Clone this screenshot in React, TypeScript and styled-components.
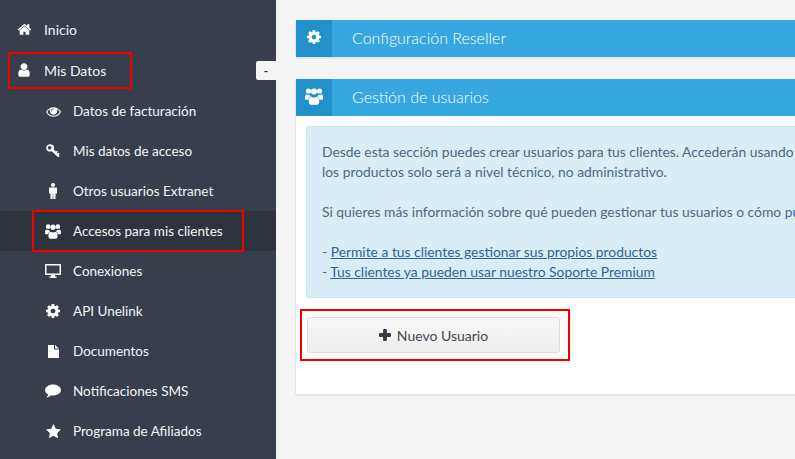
import React from "react";
import styled, { createGlobalStyle } from "styled-components";

const Global = createGlobalStyle`
  html, body { margin: 0; padding: 0; height: 100%; overflow: hidden; }
  body { font-family: Lato, "Liberation Sans", sans-serif; font-size: 14px; background: #f4f4f4; }
  #root { height: 100%; }
`;

const Page = styled.div`
  display: flex;
  width: 795px;
  height: 459px;
  overflow: hidden;
`;

const Sidebar = styled.nav`
  position: relative;
  flex: 0 0 276px;
  background: #383e4b;
  padding-top: 10px;
  box-sizing: border-box;
`;

const Row = styled.div<{ $sub?: boolean; $active?: boolean; $gap?: boolean }>`
  display: flex;
  align-items: center;
  height: 40px;
  box-sizing: border-box;
  padding-bottom: ${(p) => (p.$sub ? "0" : "2px")};
  color: #f4f6f8;
  font-size: ${(p) => (p.$sub ? "13.5px" : "14px")};
  background: ${(p) => (p.$active ? "#2f333e" : "transparent")};
  padding-left: ${(p) => (p.$sub ? "45px" : "16px")};
  margin-top: ${(p) => (p.$gap ? "1px" : "0")};
  position: relative;
`;

const IconCell = styled.span`
  flex: 0 0 16px;
  margin-right: 12px;
  display: flex;
  align-items: center;
  justify-content: center;
  color: #fff;
`;

const Svg = styled.svg`
  display: block;
  flex: none;
  fill: currentColor;
`;

const RedBox = styled.span<{ $left: number; $top: number; $width: number; $height: number }>`
  position: absolute;
  left: ${(p) => p.$left}px;
  top: ${(p) => p.$top}px;
  width: ${(p) => p.$width}px;
  height: ${(p) => p.$height}px;
  border: 2px solid #f00000;
  box-sizing: border-box;
  pointer-events: none;
`;

const CollapseTab = styled.button`
  position: absolute;
  right: 0;
  top: 61px;
  width: 20px;
  height: 19px;
  padding: 0;
  border: 0;
  border-radius: 2px 0 0 2px;
  background: #f4f4f4;
  color: #333;
  font: 700 12px Lato, sans-serif;
`;

const Main = styled.main`
  flex: 0 0 600px;
  padding: 20px 0 0 20px;
  box-sizing: border-box;
`;

const Panel = styled.section`
  margin-bottom: 22px;
  background: #fff;
  border-radius: 2px 0 0 2px;
  box-shadow: 0 1px 1px 1px #e4e6e8;
`;

const PanelHead = styled.header`
  display: flex;
  align-items: center;
  height: 37px;
  background: #36a7e0;
  color: #fff;
  border-radius: 2px 0 0 0;
`;

const HeadIcon = styled.span`
  flex: 0 0 36px;
  align-self: stretch;
  display: flex;
  align-items: center;
  justify-content: center;
  padding-bottom: 3px;
  box-sizing: border-box;
  background: #2191c9;
`;

const HeadTitle = styled.h2`
  margin: 0 0 2px 20px;
  font-size: 16px;
  font-weight: 300;
  line-height: 35px;
`;

const PanelBody = styled.div`
  padding: 10px 0 40px 10px;
  height: 278px;
  box-sizing: border-box;
`;

const Alert = styled.div`
  height: 172px;
  padding: 15px 0 0 15px;
  box-sizing: border-box;
  background: #d9edf7;
  border: 1px solid #bce8f1;
  border-right: 0;
  border-radius: 4px 0 0 4px;
  color: #4b6a80;
  font-size: 13.85px;
  line-height: 20px;
  white-space: nowrap;
`;

const Line = styled.p<{ $spaced?: boolean }>`
  margin: ${(p) => (p.$spaced ? "20px" : "0")} 0 0;
`;

const AlertLink = styled.a`
  color: #2f6396;
  text-decoration: underline;
`;

const ButtonArea = styled.div`
  position: relative;
  margin-top: 19px;
  margin-left: 1px;
`;

const NewButton = styled.button`
  display: flex;
  align-items: center;
  justify-content: center;
  gap: 6px;
  width: 253px;
  height: 36px;
  padding: 0;
  border: 1px solid #dcdcdc;
  border-radius: 3px;
  background: linear-gradient(#f7f7f7, #eeeeee);
  color: #414a55;
  font: 400 14px Lato, sans-serif;
`;

const PlusMark = styled.span`
  display: flex;
  color: #333d48;
`;

type IconProps = { w: number; h: number };

const HomeIcon = () => (
  <Svg width={15} height={15} viewBox="0 0 1792 1792">
    <path d="M1472 992v480q0 26-19 45t-45 19h-384v-384h-256v384h-384q-26 0-45-19t-19-45v-480q0-1 .5-3t.5-3l575-474 575 474q1 2 1 6zm223-69l-62 74q-8 9-21 11h-3q-13 0-21-7l-692-577-692 577q-12 8-24 7-13-2-21-11l-62-74q-8-10-7-23.5t11-21.5l719-599q32-26 76-26t76 26l244 204v-195q0-14 9-23t23-9h192q14 0 23 9t9 23v408l219 182q10 8 11 21.5t-7 23.5z" />
  </Svg>
);
const UserIcon = () => (
  <Svg width={16} height={16} viewBox="0 0 1792 1792">
    <path d="M1536 1399q0 109-62.5 187t-150.5 78h-854q-88 0-150.5-78t-62.5-187q0-85 8.5-160.5t31.5-152 58.5-131 94-89 134.5-34.5q131 128 313 128t313-128q76 0 134.5 34.5t94 89 58.5 131 31.5 152 8.5 160.5zm-256-887q0 159-112.5 271.5t-271.5 112.5-271.5-112.5-112.5-271.5 112.5-271.5 271.5-112.5 271.5 112.5 112.5 271.5z" />
  </Svg>
);
const EyeIcon = () => (
  <Svg width={15} height={15} viewBox="0 0 1792 1792">
    <path d="M1664 960q-152-236-381-353 61 104 61 225 0 185-131.5 316.5t-316.5 131.5-316.5-131.5-131.5-316.5q0-121 61-225-229 117-381 353 133 205 333.5 326.5t434.5 121.5 434.5-121.5 333.5-326.5zm-720-384q0-20-14-34t-34-14q-125 0-214.5 89.5t-89.5 214.5q0 20 14 34t34 14 34-14 14-34q0-86 61-147t147-61q20 0 34-14t14-34zm848 384q0 34-20 69-140 230-376.5 368.5t-499.5 138.5-499.5-139-376.5-368q-20-35-20-69t20-69q140-229 376.5-368t499.5-139 499.5 139 376.5 368q20 35 20 69z" />
  </Svg>
);
const KeyIcon = () => (
  <Svg width={14} height={14} viewBox="0 0 14 14">
    <path fillRule="evenodd" d="M4.2 0.2C6.500 0.200 8.200 1.800 8.200 3.800c0 .6-.1 1.100-.4 1.600l2.200 2.400 1-1 .9.9-1 1 .8.8 1-1 .9.9-1 1 .7.7c.3.4.3.9 0 1.200l-.5.5c-.3.3-.8.3-1.200 0L5.700 7.200c-.5.3-1 .4-1.500.4C2 7.600.2 6 .2 3.900.2 1.900 2 .2 4.200.2zM3.700 1.900c-1 0-1.800.8-1.800 1.800s.8 1.800 1.800 1.800 1.800-.8 1.800-1.800-.8-1.800-1.800-1.800z" />
  </Svg>
);
const MaleIcon = () => (
  <Svg width={8} height={16} viewBox="0 0 8 16">
    <circle cx="4" cy="2" r="2" />
    <path d="M1 4.500h6c.6 0 1 .4 1 1V10c0 .4-.3.6-.6.6H6.500V16H4.300v-5h-.6v5H1.500v-5.400H.6C.3 10.600 0 10.400 0 10V5.500c0-.6.4-1 1-1z" />
  </Svg>
);
const UsersIcon = ({ w, h }: IconProps) => (
  <Svg width={w} height={h} viewBox="0 0 18 17">
    <circle cx="3.500" cy="3" r="2.600" />
    <circle cx="14.500" cy="3" r="2.600" />
    <circle cx="9" cy="3.600" r="3" />
    <path d="M1.500 6.300c.7.4 1.300.6 2 .6.4 0 .7 0 1-.1.3.8.8 1.300 1.300 1.700-1.200.5-2 1.600-2.200 3.200H1.200C.4 11.700 0 11.200 0 10.400 0 8 .5 6.300 1.500 6.300z" />
    <path d="M16.500 6.300c-.7.4-1.300.6-2 .6-.4 0-.7 0-1-.1-.3.8-.8 1.300-1.300 1.700 1.200.5 2 1.600 2.200 3.200h2.400c.8 0 1.200-.5 1.200-1.300C18 8 17.500 6.300 16.500 6.300z" />
    <path d="M6.400 8.700c.8.6 1.700.9 2.600.9s1.800-.3 2.600-.9c1.800.2 2.600 2 2.600 5.300 0 1.700-.9 2.800-2.300 2.800H6.100c-1.400 0-2.300-1.100-2.300-2.800 0-3.300.8-5.100 2.600-5.300z" />
  </Svg>
);
const DesktopIcon = () => (
  <Svg width={16} height={14} viewBox="0 0 16 14">
    <path fillRule="evenodd" d="M1 0h14c.6 0 1 .4 1 1v9c0 .6-.4 1-1 1H10v1.500h1.500V14h-7v-1.500H6V11H1c-.6 0-1-.4-1-1V1c0-.6.4-1 1-1zm.5 1.500v8h13v-8z" />
  </Svg>
);
const CogIcon = ({ w, h }: IconProps) => (
  <Svg width={w} height={h} viewBox="0 128 1536 1536">
    <path d="M1024 896q0-106-75-181t-181-75-181 75-75 181 75 181 181 75 181-75 75-181zm512-109v222q0 12-8 23t-20 13l-185 28q-19 54-39 91 35 50 107 138 10 12 10 25t-9 23q-27 37-99 108t-94 71q-12 0-26-9l-138-108q-44 23-91 38-16 136-29 186-7 28-36 28h-222q-14 0-24.500-8.500t-11.500-21.500l-28-184q-49-16-90-37l-141 107q-10 9-25 9-14 0-25-11-126-114-165-168-7-10-7-23 0-12 8-23 15-21 51-66.500t54-70.500q-27-50-41-99l-183-27q-13-2-21-12.500t-8-23.500v-222q0-12 8-23t19-13l186-28q14-46 39-92-40-57-107-138-10-12-10-24 0-10 9-23 26-36 98.500-107.500t94.500-71.500q13 0 26 10l138 107q44-23 91-38 16-136 29-186 7-28 36-28h222q14 0 24.500 8.500t11.500 21.500l28 184q49 16 90 37l142-107q9-9 24-9 13 0 25 10 129 119 165 170 7 8 7 22 0 12-8 23-15 21-51 66.500t-54 70.500q26 50 41 98l183 28q13 2 21 12.500t8 23.500z" />
  </Svg>
);
const FileIcon = () => (
  <Svg width={11} height={13} viewBox="0 0 11 13">
    <path d="M0 0h6v4.500h5V13H0z" />
    <path d="M7 0l4 3.500H7z" />
  </Svg>
);
const CommentIcon = () => (
  <Svg width={16} height={14} viewBox="0 0 16 14">
    <path d="M8 .5c4.400 0 8 2.500 8 5.500s-3.600 5.500-8 5.500c-.7 0-1.300-.1-1.900-.2C5 12.500 3.300 13.300 1.500 13.500c.8-.9 1.400-1.900 1.600-3.200C1.200 9.300 0 7.800 0 6 0 3 3.600.5 8 .5z" />
  </Svg>
);
const StarIcon = () => (
  <Svg width={15} height={14} viewBox="0 0 15 14">
    <path d="M7.500 0l2.300 4.800 5.200.7-3.800 3.600.9 5.200-4.600-2.500-4.600 2.500.9-5.200L0 5.500l5.200-.7z" />
  </Svg>
);
const PlusIcon = () => (
  <Svg width={12} height={12} viewBox="0 0 12 12">
    <path d="M5 0h2c.5 0 .9.400.9.900v3.200h3.200c.5 0 .9.400.9.900v2c0 .5-.4.900-.9.900H7.900v3.200c0 .5-.4.900-.9.900H5c-.5 0-.9-.4-.9-.9V7.900H.9C.4 7.900 0 7.500 0 7V5c0-.5.400-.9.900-.9h3.200V.9C4.100.4 4.500 0 5 0z" />
  </Svg>
);

const subItems: [React.ReactNode, string, boolean?][] = [
  [<EyeIcon />, "Datos de facturación"],
  [<KeyIcon />, "Mis datos de acceso"],
  [<MaleIcon />, "Otros usuarios Extranet"],
  [<UsersIcon w={16} h={15} />, "Accesos para mis clientes", true],
  [<DesktopIcon />, "Conexiones"],
  [<CogIcon w={14} h={14} />, "API Unelink"],
  [<FileIcon />, "Documentos"],
  [<CommentIcon />, "Notificaciones SMS"],
  [<StarIcon />, "Programa de Afiliados"],
];

export default function App() {
  return (
    <Page>
      <Global />
      <Sidebar>
        <Row>
          <IconCell><HomeIcon /></IconCell>
          Inicio
        </Row>
        <Row $gap>
          <IconCell><UserIcon /></IconCell>
          Mis Datos
          <RedBox $left={8} $top={1} $width={124} $height={37} />
        </Row>
        {subItems.map(([icon, label, active]) => (
          <Row key={label} $sub $active={active}>
            <IconCell>{icon}</IconCell>
            {label}
            {active && <RedBox $left={32} $top={-1} $width={212} $height={42} />}
          </Row>
        ))}
        <CollapseTab>-</CollapseTab>
      </Sidebar>
      <Main>
        <Panel>
          <PanelHead>
            <HeadIcon><CogIcon w={14} h={14} /></HeadIcon>
            <HeadTitle>Configuración Reseller</HeadTitle>
          </PanelHead>
        </Panel>
        <Panel>
          <PanelHead>
            <HeadIcon><UsersIcon w={18} h={17} /></HeadIcon>
            <HeadTitle>Gestión de usuarios</HeadTitle>
          </PanelHead>
          <PanelBody>
            <Alert>
              <Line>Desde esta sección puedes crear usuarios para tus clientes. Accederán usando sus propios datos de acceso.</Line>
              <Line>los productos solo será a nivel técnico, no administrativo.</Line>
              <Line $spaced>Si quieres más información sobre qué pueden gestionar tus usuarios o cómo pueden acceder, consulta:</Line>
              <Line $spaced>- <AlertLink href="#">Permite a tus clientes gestionar sus propios productos</AlertLink></Line>
              <Line>- <AlertLink href="#">Tus clientes ya pueden usar nuestro Soporte Premium</AlertLink></Line>
            </Alert>
            <ButtonArea>
              <NewButton><PlusMark><PlusIcon /></PlusMark>Nuevo Usuario</NewButton>
              <RedBox $left={-7} $top={-8} $width={270} $height={52} />
            </ButtonArea>
          </PanelBody>
        </Panel>
      </Main>
    </Page>
  );
}
